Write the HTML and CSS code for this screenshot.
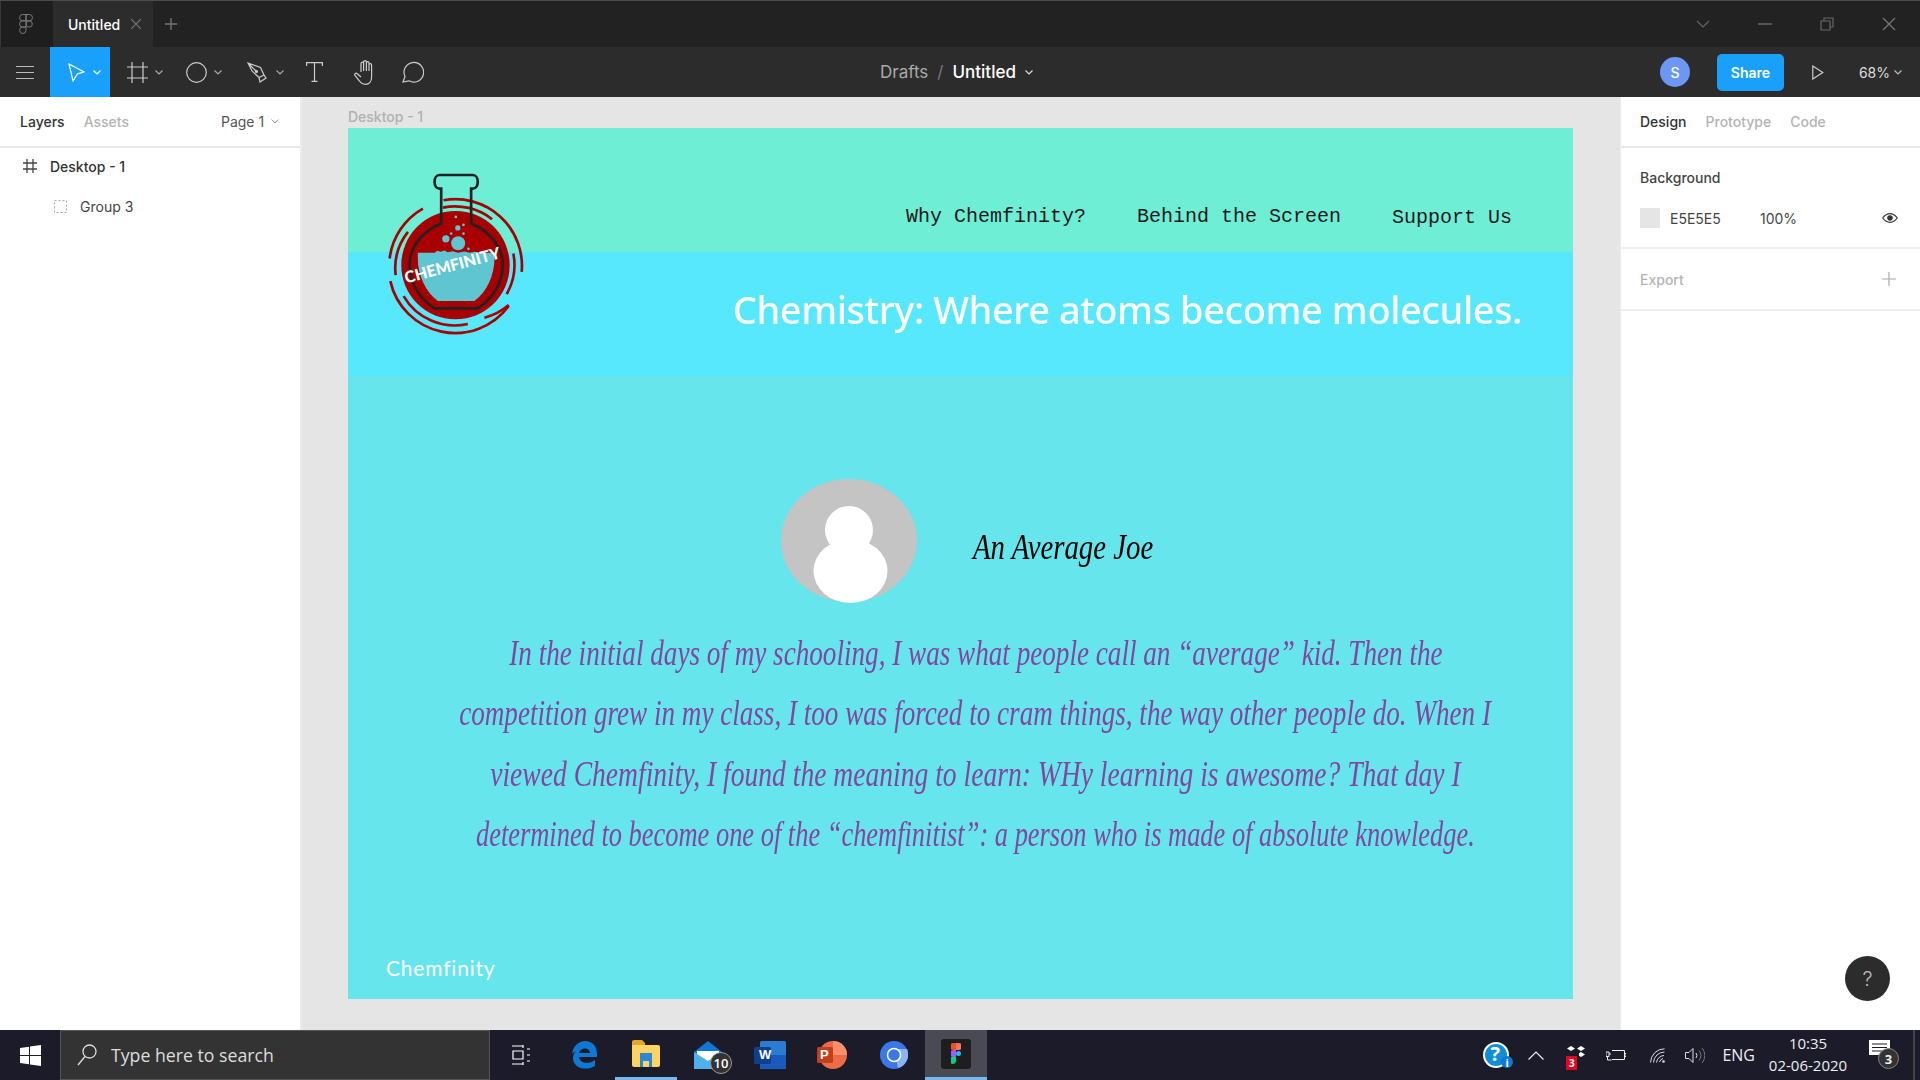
FILE: index.html
```html
<!DOCTYPE html>
<html lang="en">
<head>
    <meta charset="UTF-8">
    <meta name="viewport" content="width=device-width, initial-scale=1.0">
    <title>Untitled - Figma</title>
    <link rel="stylesheet" href="styles.css">
</head>
<body>
    <!-- Window title bar -->
    <div class="titlebar">
        <div class="app-logo">
            <svg width="14" height="20" viewBox="0 0 14 20" fill="none" stroke="#7a7a7a" stroke-width="1">
                <path d="M7 .5H3.7a3 3 0 0 0 0 6.3H7zM7 .5h3.3a3 3 0 0 1 0 6.3H7zM7 6.8H3.7a3 3 0 0 0 0 6.3H7zM7 13.1H3.7a3.2 3.2 0 1 0 3.3 3.2zM13.3 10a3.1 3.1 0 1 1-6.3 0 3.1 3.1 0 0 1 6.3 0z"/>
            </svg>
        </div>
        <div class="tab">
            <span class="tab-name">Untitled</span>
            <svg width="10" height="10" viewBox="0 0 10 10" stroke="#777" stroke-width="1.2"><path d="M0 0l10 10M10 0L0 10"/></svg>
        </div>
        <svg class="tab-add" width="12" height="12" viewBox="0 0 12 12" stroke="#777" stroke-width="1.3"><path d="M6 0v12M0 6h12"/></svg>
        <div class="window-controls">
            <svg width="14" height="8" viewBox="0 0 14 8" fill="none" stroke="#666" stroke-width="1.2"><path d="M1 1l6 6 6-6"/></svg>
            <svg width="14" height="2" viewBox="0 0 14 2" stroke="#666" stroke-width="1.5"><path d="M0 1h14"/></svg>
            <svg width="14" height="14" viewBox="0 0 14 14" fill="none" stroke="#666" stroke-width="1.2"><path d="M1 4h9v9H1zM4 4V1h9v9h-3"/></svg>
            <svg width="14" height="14" viewBox="0 0 14 14" stroke="#777" stroke-width="1.2"><path d="M1 1l12 12M13 1L1 13"/></svg>
        </div>
    </div>

    <!-- Editor toolbar -->
    <div class="toolbar">
        <div class="tools">
            <div class="tool tool-menu">
                <svg width="18" height="15" viewBox="0 0 18 15" stroke="#bbb" stroke-width="1.2"><path d="M0 1.5h18M0 7.5h18M0 13.5h18"/></svg>
            </div>
            <div class="tool tool-active">
                <svg width="17" height="19" viewBox="0 0 17 19" fill="none" stroke="#fff" stroke-width="1.2"><path d="M1 1l15 8-6.5 1.800L5 18z"/></svg>
                <svg class="chevron" width="8" height="5" viewBox="0 0 8 5" fill="none" stroke="#fff" stroke-width="1.2"><path d="M.5.5L4 4 7.500.5"/></svg>
            </div>
            <div class="tool tool-frame">
                <svg width="21" height="21" viewBox="0 0 21 21" fill="none" stroke="#ccc" stroke-width="1.200"><path d="M5 0v21M16 0v21M0 5h21M0 16h21"/></svg>
                <svg class="chevron" width="8" height="5" viewBox="0 0 8 5" fill="none" stroke="#aaa" stroke-width="1.2"><path d="M.5.5L4 4 7.500.5"/></svg>
            </div>
            <div class="tool tool-shape">
                <svg width="21" height="21" viewBox="0 0 21 21" fill="none" stroke="#ccc" stroke-width="1.200"><circle cx="10.500" cy="10.500" r="9.800"/></svg>
                <svg class="chevron" width="8" height="5" viewBox="0 0 8 5" fill="none" stroke="#aaa" stroke-width="1.2"><path d="M.5.5L4 4 7.500.5"/></svg>
            </div>
            <div class="tool tool-pen">
                <svg width="20" height="21" viewBox="0 0 20 21" fill="none" stroke="#ccc" stroke-width="1.200"><path d="M1 1l12.500 4.500L17 13l-5 2.500L5 9zM13 20l6-4-2-3-5 2.500zM1 1l8 8"/><circle cx="9.500" cy="9.500" r="1" fill="#ccc"/></svg>
                <svg class="chevron" width="8" height="5" viewBox="0 0 8 5" fill="none" stroke="#aaa" stroke-width="1.2"><path d="M.5.5L4 4 7.500.5"/></svg>
            </div>
            <div class="tool tool-text">
                <svg width="17" height="20" viewBox="0 0 17 20" fill="none" stroke="#ccc" stroke-width="1.200"><path d="M.6 4V.6h15.800V4M8.500.6v18.800M5.500 19.400h6"/></svg>
            </div>
            <div class="tool tool-hand">
                <svg width="22" height="25" viewBox="0 0 22 25" fill="none" stroke="#ccc" stroke-width="1.200"><path d="M7 12V3.500a1.300 1.300 0 0 1 2.600 0V11M9.600 11V2a1.400 1.400 0 0 1 2.800 0v9M12.400 11V3a1.300 1.300 0 0 1 2.600 0v8M15 11V5a1.300 1.300 0 0 1 2.600 0v12c0 4.500-2.500 7.300-6.100 7.300-3 0-4.500-1-6-3.300L1 15.500c-1-2 1-3 2.300-1.800L7 17"/></svg>
            </div>
            <div class="tool tool-comment">
                <svg width="22" height="22" viewBox="0 0 22 22" fill="none" stroke="#ccc" stroke-width="1.200"><path d="M1 21l2-5.500A9.800 9.800 0 1 1 7 19.800z"/></svg>
            </div>
        </div>
        <div class="breadcrumb">
            <span class="crumb-dim">Drafts</span>
            <span class="crumb-sep">/</span>
            <span class="crumb-file">Untitled</span>
            <svg width="8" height="5" viewBox="0 0 8 5" fill="none" stroke="#ddd" stroke-width="1.2"><path d="M.5.5L4 4 7.500.5"/></svg>
        </div>
        <div class="toolbar-right">
            <div class="user-dot">S</div>
            <button class="share-btn">Share</button>
            <svg class="play" width="12" height="15" viewBox="0 0 12 15" fill="none" stroke="#ccc" stroke-width="1.200"><path d="M.8 1v13l10-6.500z"/></svg>
            <span class="zoom-level">68%</span>
            <svg width="8" height="5" viewBox="0 0 8 5" fill="none" stroke="#bbb" stroke-width="1.2"><path d="M.5.5L4 4 7.500.5"/></svg>
        </div>
    </div>

    <div class="workspace">
        <!-- Layers panel -->
        <div class="left-panel">
            <div class="panel-tabs">
                <span class="panel-tab-on">Layers</span>
                <span class="panel-tab-off">Assets</span>
                <span class="page-pick">Page 1</span>
                <svg width="8" height="5" viewBox="0 0 8 5" fill="none" stroke="#999" stroke-width="1"><path d="M.5.5L4 4 7.500.5"/></svg>
            </div>
            <div class="layer-row layer-frame">
                <svg width="14" height="14" viewBox="0 0 14 14" fill="none" stroke="#444" stroke-width="1.300"><path d="M4 0v14M10 0v14M0 4h14M0 10h14"/></svg>
                <span>Desktop - 1</span>
            </div>
            <div class="layer-row layer-group">
                <svg width="13" height="13" viewBox="0 0 13 13" fill="none" stroke="#aaa" stroke-width="1" stroke-dasharray="2 2"><rect x=".5" y=".5" width="12" height="12"/></svg>
                <span>Group 3</span>
            </div>
        </div>

        <!-- Canvas with the one frame on it -->
        <div class="canvas">
            <div class="frame-label">Desktop - 1</div>
            <div class="frame">
                <div class="frame-nav">
                    <span>Why Chemfinity?</span>
                    <span>Behind the Screen</span>
                    <span class="nav-last">Support Us</span>
                </div>
                <div class="frame-banner">
                    <h1>Chemistry: Where atoms become molecules.</h1>
                </div>
                <div class="frame-body">
                    <div class="person">
                        <svg width="136" height="124" viewBox="0 0 136 124">
                            <ellipse cx="68" cy="61.500" rx="68" ry="61.500" fill="#c4c4c4"/>
                            <circle cx="68" cy="51" r="24" fill="#fff"/>
                            <ellipse cx="69.500" cy="92" rx="37" ry="32" fill="#fff"/>
                        </svg>
                        <span class="person-name">An Average Joe</span>
                    </div>
                    <div class="story">
                        <span class="line-one">In the initial days of my schooling, I was what people call an “average” kid. Then the</span>
                        <span class="line-two">competition grew in my class, I too was forced to cram things, the way other people do. When I</span>
                        <span class="line-three">viewed Chemfinity, I found the meaning to learn: WHy learning is awesome? That day I</span>
                        <span class="line-four">determined to become one of the “chemfinitist”: a person who is made of absolute knowledge.</span>
                    </div>
                    <div class="frame-footer">Chemfinity</div>
                </div>

                <svg class="logo" width="143" height="167" viewBox="100 150 430 500" fill="none">
                    <circle cx="318" cy="435" r="163" fill="#a80000"/>
                    <g stroke="#a80000" stroke-width="8">
                        <path d="M220 265A200 200 0 0 0 120 415"/>
                        <path d="M282 240A200 200 0 0 1 517 455"/>
                        <path d="M122 483A200 200 0 0 0 478 558"/>
                        <path d="M175 335A178 178 0 0 0 138 465"/>
                        <path d="M280 262A178 178 0 0 1 428 297"/>
                        <path d="M492 400A178 178 0 0 1 472 522"/>
                        <path d="M162 528A178 178 0 0 0 355 612"/>
                        <path d="M405 593A178 178 0 0 0 478 555"/>
                    </g>
                    <path d="M205 398h50l8-6 10 3 12-4 10 5 15-3 15 5 20-4 15 4 15-3 14 3h46c4 60-20 115-60 145H265c-40-30-64-85-60-145z" fill="#5fc5d0"/>
                    <g fill="#5fc5d0">
                        <circle cx="326" cy="369" r="21"/>
                        <circle cx="289" cy="356" r="11"/>
                        <circle cx="325" cy="323" r="8"/>
                        <circle cx="319" cy="290" r="4"/>
                        <circle cx="342" cy="314" r="4"/>
                        <circle cx="342" cy="340" r="4"/>
                        <circle cx="305" cy="340" r="4"/>
                        <circle cx="357" cy="386" r="4"/>
                    </g>
                    <path d="M275 205v105c-60 25-98 75-95 130 2 50 30 95 75 125h130c45-30 73-75 75-125 3-55-35-105-95-130V205h5c20 0 20-41 0-41H270c-20 0-20 41 0 41z" stroke="#222" stroke-width="8"/>
                    <text class="logo-text" x="0" y="0" transform="translate(170 490) rotate(-15)">CHEMFINITY</text>
                </svg>
            </div>
        </div>

        <!-- Design panel -->
        <div class="right-panel">
            <div class="panel-tabs">
                <span class="panel-tab-on">Design</span>
                <span class="panel-tab-off">Prototype</span>
                <span class="panel-tab-off">Code</span>
            </div>
            <div class="panel-section bg-section">
                <div class="section-title">Background</div>
                <div class="fill-row">
                    <div class="swatch"></div>
                    <span class="fill-hex">E5E5E5</span>
                    <span class="fill-pct">100%</span>
                    <svg width="16" height="10" viewBox="0 0 16 10" fill="none" stroke="#333" stroke-width="1.200"><path d="M.7 5C3 2 5.300.7 8 .7S13 2 15.300 5C13 8 10.700 9.300 8 9.300S3 8 .7 5z"/><circle cx="8" cy="5" r="2.200" fill="#333"/></svg>
                </div>
            </div>
            <div class="panel-section export-section">
                <span class="section-dim">Export</span>
                <svg width="14" height="14" viewBox="0 0 14 14" stroke="#aaa" stroke-width="1.200"><path d="M7 0v14M0 7h14"/></svg>
            </div>
        </div>
    </div>

    <div class="help-btn">?</div>

    <!-- Windows taskbar -->
    <div class="taskbar">
        <div class="start">
            <svg width="21" height="21" viewBox="0 0 21 21" fill="#fff"><path d="M0 3l9-1.300V10H0zM10 1.500L21 0v10H10zM0 11h9v8.300L0 18zM10 11h11v10l-11-1.500z"/></svg>
        </div>
        <div class="search">
            <svg width="20" height="22" viewBox="0 0 20 22" fill="none" stroke="#ddd" stroke-width="1.300"><circle cx="12.500" cy="7.500" r="6.500"/><path d="M8 12.500L1 21"/></svg>
            <span>Type here to search</span>
        </div>
        <div class="task-view">
            <svg width="20" height="20" viewBox="0 0 20 20" fill="none" stroke="#fff" stroke-width="1.200"><path d="M0 1h11M11 0v3M0 19h11M11 20v-3M1 6h10v8H1zM15 4h3M15 10h3M15 16h3"/></svg>
        </div>
        <div class="task-icon">
            <svg width="26" height="28" viewBox="0 0 26 28"><path d="M1 13C2 5 8 0 14 0c7 0 12 5 12 13v3H8c.5 6 9 8 16 3v6c-8 5-22 3-22-8 0-3 1-5 3-7-2 1-3 2-4 3zm7-1h11c0-6-10-6-11 0z" fill="#0f78d4"/></svg>
        </div>
        <div class="task-icon task-open">
            <svg width="28" height="27" viewBox="0 0 28 27"><path d="M0 2a2 2 0 0 1 2-2h8l3 3v3H0z" fill="#e2a72e"/><path d="M0 5h26a2 2 0 0 1 2 2v18a2 2 0 0 1-2 2H2a2 2 0 0 1-2-2z" fill="#fcd462"/><path d="M8 13h12v14h-3v-6h-6v6H8z" fill="#2b88d8"/></svg>
        </div>
        <div class="task-icon task-mail">
            <svg width="28" height="28" viewBox="0 0 28 28"><path d="M0 11L14 0l14 11v17H0z" fill="#0f78d4"/><path d="M3 10h22v6l-11 6-11-6z" fill="#fff"/><path d="M0 11l14 9 14-9v17H0z" fill="#50b0ee"/></svg>
            <span class="mail-badge">10</span>
        </div>
        <div class="task-icon">
            <svg width="32" height="28" viewBox="0 0 32 28"><rect x="6" width="26" height="28" rx="1.500" fill="#2b7cd3"/><rect x="6" y="14" width="26" height="14" fill="#185abd"/><rect y="6" width="17" height="17" rx="1.500" fill="#103f91"/></svg>
            <span class="word-mark">W</span>
        </div>
        <div class="task-icon">
            <svg width="30" height="28" viewBox="0 0 30 28"><circle cx="16" cy="14" r="14" fill="#ed6c47"/><path d="M16 0a14 14 0 0 1 14 14H16z" fill="#ff8f6b"/><rect y="6" width="16" height="16" rx="1.500" fill="#c43e1c"/></svg>
            <span class="ppt-mark">P</span>
        </div>
        <div class="task-icon">
            <svg width="28" height="28" viewBox="0 0 28 28" fill="none"><circle cx="14" cy="14" r="14" fill="#3b78e7"/><path d="M14 8h13a14 14 0 0 1-9 19z" fill="#8ab4f8"/><circle cx="14" cy="14" r="6.500" fill="#3b78e7" stroke="#fff" stroke-width="1.500"/></svg>
        </div>
        <div class="task-icon task-active">
            <div class="figma-tile">
                <svg width="10" height="21" viewBox="0 0 10 21"><path d="M5 0H2.500a2.500 2.500 0 0 0 0 7H5z" fill="#f24e1e"/><path d="M5 0h2.500a2.500 2.500 0 0 1 0 7H5z" fill="#ff7262"/><path d="M5 7H2.500a2.500 2.500 0 0 0 0 7H5z" fill="#a259ff"/><circle cx="7.500" cy="10.500" r="2.500" fill="#1abcfe"/><path d="M5 14H2.500A3.500 3.500 0 1 0 5 18z" fill="#0acf83"/></svg>
            </div>
        </div>

        <div class="tray">
            <div class="tray-help">
                <svg width="30" height="26" viewBox="0 0 30 26"><circle cx="13" cy="13" r="12" fill="#0f8fd8" stroke="#fff" stroke-width="2"/><circle cx="24" cy="20" r="6" fill="#0f78d4"/></svg>
                <span class="help-mark">?</span>
                <span class="help-info">i</span>
            </div>
            <svg class="tray-caret" width="16" height="9" viewBox="0 0 16 9" fill="none" stroke="#eee" stroke-width="1.200"><path d="M.5 8.500L8 1l7.500 7.500"/></svg>
            <div class="tray-drop">
                <svg width="20" height="18" viewBox="0 0 20 18" fill="#fff"><path d="M4 0l4 2.500L4 5 0 2.500zM14 0l4 2.500L14 5l-4-2.500zM14 6l4 2.500-4 2.500-2-1.300V7.300z"/></svg>
                <span class="drop-badge">3</span>
            </div>
            <svg class="tray-battery" width="20" height="12" viewBox="0 0 20 12" fill="none" stroke="#eee" stroke-width="1"><path d="M6 1.500h12.500v9H6M18.500 4.500H20v3h-1.500M0 3h3v4.500H0zM3 5h2M1.500 7.500V11h4"/></svg>
            <svg class="tray-wifi" width="16" height="15" viewBox="0 0 16 15" fill="none" stroke="#ddd" stroke-width="1"><path d="M.5 14.500A14 14 0 0 1 14.500.8M3.500 14.500A11 11 0 0 1 14.500 4M6.500 14.500A8 8 0 0 1 14 7.500M9.500 14A5 5 0 0 1 13 10.500"/><circle cx="13.500" cy="13.500" r="1.300" fill="#ddd" stroke="none"/></svg>
            <svg class="tray-sound" width="20" height="17" viewBox="0 0 20 17" fill="none" stroke="#ddd" stroke-width="1"><path d="M.5 5.500h3.500L8 1.500v14l-4-4H.5zM11 6a4 4 0 0 1 0 5"/><path d="M14 3.500a8 8 0 0 1 0 10M17 1a11.500 11.500 0 0 1 0 15" stroke="#777"/></svg>
            <span class="tray-lang">ENG</span>
            <div class="tray-clock">
                <div>10:35</div>
                <div>02-06-2020</div>
            </div>
            <div class="tray-notes">
                <svg width="21" height="20" viewBox="0 0 21 20"><path d="M0 0h21v15h-8l-3 4v-4H0z" fill="#fff"/><path d="M3 4h15M3 7.500h15M3 11h10" stroke="#1b1b2a" stroke-width="1"/></svg>
                <span class="notes-badge">3</span>
            </div>
        </div>
    </div>
</body>
</html>
```

FILE: styles.css
```css
* {
    box-sizing: border-box;
}

body {
    margin: 0;
    width: 1920px;
    height: 1080px;
    overflow: hidden;
    display: flex;
    flex-direction: column;
    font-family: 'Inter', 'Liberation Sans', sans-serif;
    font-size: 14px;
    color: #333;
    background-color: #e5e5e5;
}

/* Title bar */
.titlebar {
    height: 47px;
    flex: none;
    display: flex;
    align-items: center;
    background-color: #222;
    border-top: 1px solid #4a4a4a;
}

.app-logo {
    width: 53px;
    height: 100%;
    padding-right: 2px;
    display: flex;
    align-items: center;
    justify-content: center;
    background-color: #1e1e1e;
    border-left: 1px solid #383838;
}

.tab {
    width: 100px;
    height: 100%;
    padding-left: 15px;
    display: flex;
    align-items: center;
    gap: 11px;
    background-color: #2c2c2c;
}

.tab-name {
    color: #fff;
    font-size: 14px;
    font-weight: 500;
    width: 52px;
}

.tab-add {
    margin-left: 12px;
}

.window-controls {
    margin-left: auto;
    display: flex;
    align-items: center;
    gap: 48px;
    padding-right: 24px;
}

/* Toolbar */
.toolbar {
    height: 50px;
    flex: none;
    display: grid;
    grid-template-columns: 1fr auto 1fr;
    align-items: center;
    background-color: #2c2c2c;
}

.tools {
    height: 100%;
    display: flex;
    align-items: center;
}

.tool {
    height: 100%;
    display: flex;
    align-items: center;
}

.tool-menu { width: 50px; padding-left: 16px; }
.tool-active { width: 60px; padding-left: 18px; background-color: #18a0fb; gap: 8px; }
.tool-frame { width: 66px; padding-left: 17px; gap: 7px; }
.tool-shape { width: 60px; padding-left: 10px; gap: 7px; }
.tool-pen { width: 61px; padding-left: 11px; gap: 9px; }
.tool-text { width: 55px; padding-left: 9px; }
.tool-hand { width: 50px; padding-left: 2px; }
.tool-comment { padding-left: 0; }

.breadcrumb {
    display: flex;
    align-items: center;
    gap: 9px;
    padding-right: 7px;
    font-size: 17px;
}

.crumb-dim { color: #aaa; }
.crumb-sep { color: #777; }
.crumb-file { color: #fff; font-weight: 500; }

.toolbar-right {
    display: flex;
    align-items: center;
    justify-content: flex-end;
    padding-right: 18px;
}

.user-dot {
    width: 30px;
    height: 30px;
    border-radius: 50%;
    background-color: #6c97f5;
    color: #fff;
    font-size: 14px;
    font-weight: 500;
    display: flex;
    align-items: center;
    justify-content: center;
}

.share-btn {
    width: 67px;
    height: 37px;
    margin-left: 27px;
    border: none;
    border-radius: 5px;
    background-color: #18a0fb;
    color: #fff;
    font-family: inherit;
    font-size: 14px;
    font-weight: 600;
}

.play {
    margin-left: 28px;
}

.zoom-level {
    margin-left: 35px;
    margin-right: 4px;
    color: #ddd;
    font-size: 14px;
}

/* Panels and canvas */
.workspace {
    flex: 1;
    display: flex;
    min-height: 0;
}

.left-panel {
    width: 302px;
    flex: none;
    background-color: #fff;
    border-right: 2px solid #ececec;
}

.right-panel {
    width: 300px;
    flex: none;
    background-color: #fff;
    border-left: 1px solid #ececec;
}

.panel-tabs {
    height: 51px;
    padding-left: 19px;
    display: flex;
    align-items: center;
    gap: 19px;
    font-size: 14px;
    border-bottom: 2px solid #e8e8e8;
}

.left-panel .panel-tabs {
    padding-left: 20px;
}

.panel-tab-on { font-weight: 500; color: #333; }
.panel-tab-off { font-weight: 500; color: #b3b3b3; }

.page-pick {
    margin-left: 73px;
    margin-right: -12px;
    color: #555;
}

.layer-row {
    height: 40px;
    display: flex;
    align-items: center;
    font-size: 14px;
}

.layer-frame {
    margin-top: -2px;
    padding-left: 23px;
    gap: 13px;
    font-weight: 500;
    color: #333;
}

.layer-group {
    padding-left: 54px;
    gap: 13px;
    color: #444;
}

.canvas {
    flex: 1;
    padding: 11px 0 0 46px;
}

.frame-label {
    height: 20px;
    font-size: 14px;
    font-weight: 500;
    color: #b0b0b0;
}

.frame {
    position: relative;
    width: 1225px;
    height: 871px;
    display: flex;
    flex-direction: column;
    background-color: #66e5ec;
}

.frame-nav {
    height: 124px;
    flex: none;
    padding: 77px 61px 0 0;
    display: flex;
    justify-content: flex-end;
    gap: 51px;
    background-color: #6feed6;
    color: #1a1a1a;
    font-family: 'Liberation Mono', monospace;
    font-size: 20px;
}

.nav-last {
    margin-top: 1px;
}

.frame-banner {
    height: 124px;
    flex: none;
    padding: 31px 51px 0 0;
    display: flex;
    justify-content: flex-end;
    background-color: #57e8fd;
}

.frame-banner h1 {
    margin: 0;
    font-family: 'Noto Sans', sans-serif;
    font-size: 38px;
    font-weight: 500;
    line-height: 52px;
    letter-spacing: -.45px;
    background: linear-gradient(#ffffff 40%, #dfee9a 75%);
    -webkit-background-clip: text;
    background-clip: text;
    color: transparent;
}

.frame-body {
    flex: 1;
    padding-top: 103px;
    display: flex;
    flex-direction: column;
}

.person {
    margin-left: 433px;
    display: flex;
    gap: 56px;
    align-items: center;
}

.person-name {
    display: block;
    margin-top: 12px;
    width: 180px;
    white-space: nowrap;
    font-family: 'Liberation Serif', serif;
    font-style: italic;
    font-size: 36px;
    color: #000;
    transform: scaleX(.8);
    transform-origin: left center;
}

.story {
    margin-top: 20px;
    padding-left: 30px;
    display: flex;
    flex-direction: column;
    align-items: center;
    font-family: 'Liberation Serif', serif;
    font-style: italic;
    font-size: 36px;
    line-height: 60.3px;
    color: #83459f;
    white-space: nowrap;
}

/* each line squeezed on its own, the original face is a narrow script */
.line-one { transform: scaleX(.754); }
.line-two { transform: scaleX(.753); }
.line-three { transform: scaleX(.766); }
.line-four { transform: scaleX(.734); }

.frame-footer {
    margin-top: auto;
    padding: 0 0 19px 38px;
    font-family: 'Lato', sans-serif;
    font-size: 21px;
    letter-spacing: .8px;
    color: #fff;
}

.logo {
    position: absolute;
    left: 35px;
    top: 42px;
}

.logo-text {
    fill: #fff;
    font-family: 'Lato', sans-serif;
    font-weight: 900;
    font-size: 48px;
}

.panel-section {
    padding: 0 22px 0 19px;
    border-bottom: 2px solid #efefef;
}

.bg-section {
    height: 101px;
    padding-top: 21px;
}

.section-title {
    font-size: 14px;
    font-weight: 500;
    color: #444;
}

.fill-row {
    margin-top: 22px;
    display: flex;
    align-items: center;
    font-size: 14px;
    color: #444;
}

.swatch {
    width: 20px;
    height: 20px;
    background-color: #e5e5e5;
}

.fill-hex {
    margin-left: 10px;
    width: 90px;
}

.fill-pct {
    flex: 1;
}

.export-section {
    height: 62px;
    display: flex;
    align-items: center;
    justify-content: space-between;
    padding-right: 24px;
}

.section-dim {
    font-size: 14px;
    font-weight: 500;
    color: #b3b3b3;
}

.help-btn {
    position: absolute;
    left: 1845px;
    top: 956px;
    width: 45px;
    height: 45px;
    border-radius: 50%;
    background-color: #2c2c2c;
    color: #bbb;
    font-size: 20px;
    font-weight: 300;
    display: flex;
    align-items: center;
    justify-content: center;
}

/* Taskbar */
.taskbar {
    height: 50px;
    flex: none;
    display: flex;
    align-items: center;
    background-color: #1b1b2a;
    color: #eee;
    font-family: 'Open Sans', 'Noto Sans', sans-serif;
}

.start {
    width: 60px;
    display: flex;
    justify-content: center;
}

.search {
    width: 430px;
    height: 100%;
    padding-left: 16px;
    display: flex;
    align-items: center;
    gap: 14px;
    background-color: #333;
    border: 1px solid #555;
    font-size: 17.7px;
    color: #ddd;
}

.task-view {
    width: 63px;
    display: flex;
    justify-content: center;
}

.task-icon {
    position: relative;
    width: 62px;
    height: 100%;
    display: flex;
    align-items: center;
    justify-content: center;
}

.task-open {
    border-bottom: 3px solid #76b9ed;
}

.task-active {
    background-color: #4a4a54;
    border-bottom: 3px solid #76b9ed;
}

.figma-tile {
    width: 30px;
    height: 30px;
    border-radius: 3px;
    background-color: #1e1e1e;
    display: flex;
    align-items: center;
    justify-content: center;
}

.mail-badge {
    position: absolute;
    left: 33px;
    top: 22px;
    width: 22px;
    height: 22px;
    border-radius: 50%;
    background-color: #333;
    border: 1px solid #999;
    font-size: 13px;
    font-weight: 600;
    color: #fff;
    display: flex;
    align-items: center;
    justify-content: center;
}

.word-mark, .ppt-mark {
    position: absolute;
    top: 17px;
    color: #fff;
    font-family: 'Liberation Sans', sans-serif;
    font-size: 13px;
    font-weight: 700;
}

.word-mark { left: 20px; }
.ppt-mark { left: 19px; }

.tray {
    margin-left: auto;
    height: 100%;
    display: flex;
    align-items: center;
    border-right: 2px solid #444;
    margin-right: 5px;
}

.tray-help {
    position: relative;
    width: 30px;
    margin-right: 15px;
}

.tray-help svg {
    display: block;
}

.help-mark {
    position: absolute;
    left: 7px;
    top: -2px;
    color: #fff;
    font-size: 20px;
    font-weight: 700;
}

.help-info {
    position: absolute;
    left: 22px;
    top: 13px;
    color: #fff;
    font-size: 11px;
    font-weight: 700;
}

.tray-caret { margin-right: 23px; }

.tray-drop {
    position: relative;
    width: 20px;
    height: 18px;
    margin-right: 19px;
}

.drop-badge {
    position: absolute;
    left: -1px;
    top: 10px;
    width: 11px;
    height: 14px;
    background-color: #e0061f;
    color: #fff;
    font-size: 10px;
    font-weight: 700;
    text-align: center;
    line-height: 14px;
}

.tray-battery { margin-right: 24px; }
.tray-wifi { margin-right: 19px; }
.tray-sound { margin-right: 17px; }

.tray-lang {
    font-size: 16px;
    margin-right: 13px;
}

.tray-clock {
    width: 80px;
    margin-top: -2px;
    font-size: 15px;
    line-height: 22px;
    text-align: center;
    margin-right: 21px;
}

.tray-notes {
    position: relative;
    width: 44px;
    height: 30px;
}

.notes-badge {
    position: absolute;
    left: 9px;
    top: 8px;
    width: 21px;
    height: 21px;
    border-radius: 50%;
    background-color: #333;
    border: 1px solid #888;
    font-size: 13px;
    font-weight: 700;
    display: flex;
    align-items: center;
    justify-content: center;
}
```
